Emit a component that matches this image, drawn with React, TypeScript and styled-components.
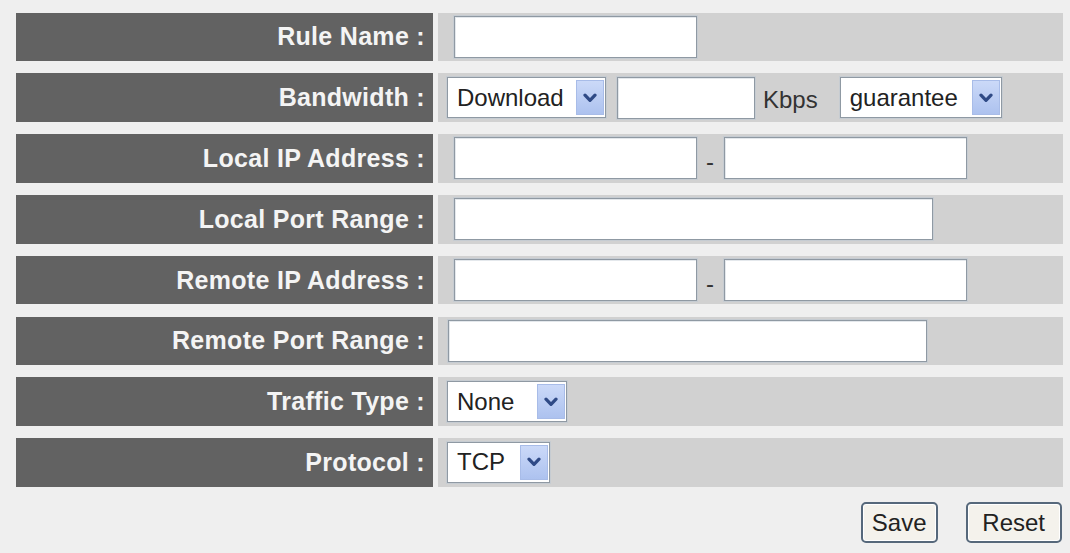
import React from "react";
import styled, { createGlobalStyle } from "styled-components";

const GlobalStyle = createGlobalStyle`
  html, body {
    margin: 0;
    padding: 0;
    background: #efefef;
  }
  body {
    font-family: "Liberation Sans", Arial, sans-serif;
  }
`;

const Page = styled.div`
  width: 1070px;
  height: 553px;
  box-sizing: border-box;
  padding: 12.6px 7.3px 0 16.4px;
  display: flex;
  flex-direction: column;
`;

const Form = styled.div`
  display: grid;
  grid-template-columns: 416.6px 1fr;
  column-gap: 5px;
  row-gap: 12.2px;
  grid-auto-rows: 48.6px;
`;

const Label = styled.div`
  background: #626262;
  color: #f4f4f4;
  font-weight: bold;
  font-size: 25px;
  letter-spacing: 0.3px;
  display: flex;
  align-items: center;
  justify-content: flex-end;
  padding-right: 8px;
  white-space: nowrap;
`;

const Cell = styled.div<{ $pad: number }>`
  background: #d1d1d1;
  display: flex;
  align-items: center;
  padding-left: ${(p) => p.$pad}px;
`;

const TextBox = styled.input<{ $w: number; $ml?: number }>`
  box-sizing: border-box;
  width: ${(p) => p.$w}px;
  height: 42px;
  margin: 0 0 0 ${(p) => p.$ml ?? 0}px;
  padding: 0 8px;
  border: 1px solid #8f99a3;
  box-shadow: 0 0 0 1px #c6ccd2, inset 1px 1px 0 #e4e8ec;
  background: #fff;
  font: 24px "Liberation Sans", Arial, sans-serif;
  color: #222;
  outline: none;
`;

const SelectBox = styled.div<{ $w: number; $ml?: number }>`
  box-sizing: border-box;
  width: ${(p) => p.$w}px;
  height: 41px;
  margin-left: ${(p) => p.$ml ?? 0}px;
  display: flex;
  align-items: stretch;
  padding: 2px 1px 2px 2px;
  border: 1px solid #8f99a3;
  box-shadow: 0 0 0 1px #c6ccd2;
  background: #fff;
`;

const SelectText = styled.span`
  flex: 1;
  display: flex;
  align-items: center;
  padding-left: 7px;
  font-size: 24px;
  color: #222;
  white-space: nowrap;
`;

const ArrowBox = styled.span`
  width: 28px;
  box-sizing: border-box;
  display: flex;
  align-items: center;
  justify-content: center;
  background: linear-gradient(#cbd9f8, #adc2ef);
  border: 1px solid #a8bce8;
`;

const Unit = styled.span<{ $ml: number }>`
  margin-left: ${(p) => p.$ml}px;
  font-size: 24px;
  color: #333;
  padding-top: 4px;
`;

const Dash = styled.span`
  margin: 0 10px 0 9px;
  font-size: 24px;
  color: #333;
  padding-top: 8px;
`;

const Actions = styled.div`
  display: flex;
  justify-content: flex-end;
  gap: 28px;
  margin-top: 15.4px;
  padding-right: 1px;
`;

const Button = styled.button<{ $w: number }>`
  box-sizing: border-box;
  width: ${(p) => p.$w}px;
  height: 41px;
  padding: 0;
  border: 2px solid #56687b;
  border-radius: 5px;
  background: #f4f2ec;
  box-shadow: inset 0 0 0 1px #ffffff;
  font: 24px "Liberation Sans", Arial, sans-serif;
  color: #222;
`;

const Chevron = () => (
  <svg width="14" height="10" viewBox="0 0 14 10">
    <polyline
      points="2,2.2 7,7.4 12,2.2"
      fill="none"
      stroke="#2f4a86"
      strokeWidth="3.2"
      strokeLinecap="round"
      strokeLinejoin="round"
    />
  </svg>
);

const Select = ({ value, w, ml }: { value: string; w: number; ml?: number }) => (
  <SelectBox $w={w} $ml={ml}>
    <SelectText>{value}</SelectText>
    <ArrowBox>
      <Chevron />
    </ArrowBox>
  </SelectBox>
);

export default function App() {
  return (
    <>
      <GlobalStyle />
      <Page>
        <Form>
          <Label>Rule Name :</Label>
          <Cell $pad={16}>
            <TextBox $w={243} />
          </Cell>

          <Label>Bandwidth :</Label>
          <Cell $pad={9}>
            <Select value="Download" w={159} />
            <TextBox $w={138} $ml={11} />
            <Unit $ml={8}>Kbps</Unit>
            <Select value="guarantee" w={162} ml={22} />
          </Cell>

          <Label>Local IP Address :</Label>
          <Cell $pad={16}>
            <TextBox $w={243} />
            <Dash>-</Dash>
            <TextBox $w={243} />
          </Cell>

          <Label>Local Port Range :</Label>
          <Cell $pad={16}>
            <TextBox $w={479} />
          </Cell>

          <Label>Remote IP Address :</Label>
          <Cell $pad={16}>
            <TextBox $w={243} />
            <Dash>-</Dash>
            <TextBox $w={243} />
          </Cell>

          <Label>Remote Port Range :</Label>
          <Cell $pad={10}>
            <TextBox $w={479} />
          </Cell>

          <Label>Traffic Type :</Label>
          <Cell $pad={9}>
            <Select value="None" w={120} />
          </Cell>

          <Label>Protocol :</Label>
          <Cell $pad={9}>
            <Select value="TCP" w={103} />
          </Cell>
        </Form>
        <Actions>
          <Button $w={77}>Save</Button>
          <Button $w={96}>Reset</Button>
        </Actions>
      </Page>
    </>
  );
}
